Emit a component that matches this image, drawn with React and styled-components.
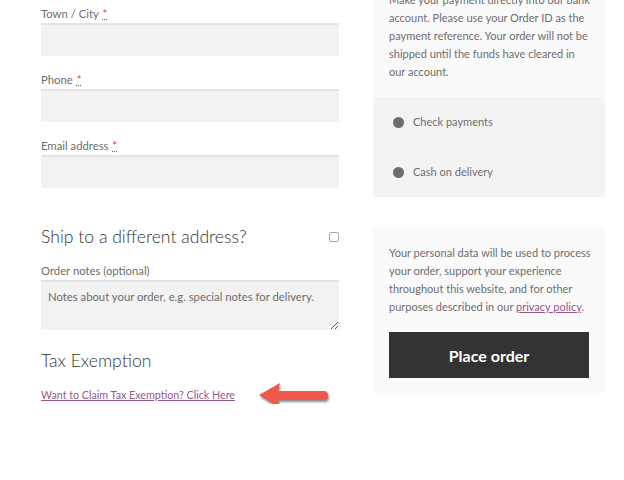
import React from "react";
import styled, { createGlobalStyle } from "styled-components";

const GlobalStyle = createGlobalStyle`
  html, body {
    margin: 0;
    background: #ffffff;
    overflow: hidden;
  }
  body {
    font-family: "Lato", "Liberation Sans", sans-serif;
    color: #6d6d6d;
    font-size: 11.3px;
  }
`;

const Page = styled.div`
  display: grid;
  grid-template-columns: 298px 232px;
  column-gap: 34px;
  padding-left: 41px;
  align-items: start;
`;

const Billing = styled.div`
  display: flex;
  flex-direction: column;
  padding-top: 5px;
`;

const Field = styled.div`
  display: flex;
  flex-direction: column;
  margin-bottom: ${(p) => p.$gap ?? 15}px;
`;

const Label = styled.label`
  line-height: 18px;
  color: #6d6d6d;
`;

const Required = styled.abbr`
  color: #e2401c;
  text-decoration: underline dotted;
  margin-left: 1px;
`;

const TextInput = styled.input`
  height: 33px;
  box-sizing: border-box;
  border: 0;
  background: #f2f2f2;
  box-shadow: inset 0 2px 0 #e4e4e4;
  outline: none;
`;

const NotesArea = styled.textarea`
  height: 50px;
  box-sizing: border-box;
  border: 0;
  background: #f2f2f2;
  box-shadow: inset 0 2px 0 #e4e4e4;
  padding: 8px 7px;
  font-family: inherit;
  font-size: 11.3px;
  line-height: 18px;
  color: #6d6d6d;
  outline: none;
  &::placeholder {
    color: #6d6d6d;
  }
`;

const HeadingRow = styled.div`
  display: flex;
  align-items: center;
  justify-content: space-between;
  margin-top: ${(p) => p.$top}px;
  margin-bottom: ${(p) => p.$bottom}px;
`;

const Heading = styled.h3`
  margin: 0;
  font-size: 17.6px;
  line-height: 24px;
  font-weight: 300;
  color: #333333;
`;

const Check = styled.input.attrs({ type: "checkbox" })`
  appearance: none;
  margin: 0;
  width: 10px;
  height: 10px;
  border: 1px solid #a8a8a8;
  border-radius: 2px;
  background: #fff;
`;

const LinkRow = styled.div`
  display: flex;
  align-items: center;
  height: 18px;
  line-height: 18px;
  font-size: 10.7px;
  white-space: nowrap;
`;

const Link = styled.a`
  color: #96588a;
  text-decoration: underline;
  font-size: inherit;
  cursor: pointer;
`;

// annotation arrow pointing back at the link
const Arrow = styled.svg`
  flex: none;
  margin: -4px 0 -6px 23px;
  filter: drop-shadow(1px 2px 1px rgba(0, 0, 0, 0.45));
`;

const Review = styled.div`
  display: flex;
  flex-direction: column;
  margin-top: -9px;
  font-size: 11px;
`;

const PaymentBox = styled.div`
  background: #fafafa;
  padding: 0 16px 16px;
  line-height: 18px;
  white-space: nowrap;
`;

const Methods = styled.ul`
  list-style: none;
  margin: 0;
  padding: 0;
  background: #f3f3f3;
`;

const Method = styled.li`
  display: flex;
  align-items: center;
  gap: 9px;
  height: 50px;
  padding: 0 20px;
  line-height: 18px;
`;

const Dot = styled.span`
  width: 11px;
  height: 11px;
  border-radius: 50%;
  background: #6d6d6d;
`;

const PrivacyBox = styled.div`
  margin-top: 30px;
  background: #fafafa;
  padding: 17px 16px 15px;
  line-height: 18px;
  white-space: nowrap;
`;

const PlaceOrder = styled.button`
  display: block;
  width: 100%;
  height: 46px;
  margin-top: 16px;
  border: 0;
  background: #333333;
  color: #ffffff;
  font-family: inherit;
  font-size: 16px;
  font-weight: 700;
`;

export default function App() {
  return (
    <>
      <GlobalStyle />
      <Page>
        <Billing>
          <Field>
            <Label>
              Town / City <Required title="required">*</Required>
            </Label>
            <TextInput />
          </Field>
          <Field>
            <Label>
              Phone <Required title="required">*</Required>
            </Label>
            <TextInput />
          </Field>
          <Field $gap={0}>
            <Label>
              Email address <Required title="required">*</Required>
            </Label>
            <TextInput />
          </Field>

          <HeadingRow $top={37} $bottom={13}>
            <Heading>Ship to a different address?</Heading>
            <Check />
          </HeadingRow>
          <Field $gap={0}>
            <Label>Order notes (optional)</Label>
            <NotesArea placeholder="Notes about your order, e.g. special notes for delivery." />
          </Field>

          <HeadingRow $top={19} $bottom={13}>
            <Heading>Tax Exemption</Heading>
          </HeadingRow>
          <LinkRow>
            <Link>Want to Claim Tax Exemption? Click Here</Link>
            <Arrow width="72" height="28" viewBox="0 0 72 28">
              <path
                d="M1 13 L22 1 L20 9 L66 9 Q70 9 70 13.5 Q70 18 66 18 L20 18 L22 26 Z"
                fill="#f0584a"
              />
            </Arrow>
          </LinkRow>
        </Billing>

        <Review>
          <PaymentBox>
            Make your payment directly into our bank
            <br />
            account. Please use your Order ID as the
            <br />
            payment reference. Your order will not be
            <br />
            shipped until the funds have cleared in
            <br />
            our account.
          </PaymentBox>
          <Methods>
            <Method>
              <Dot />
              Check payments
            </Method>
            <Method>
              <Dot />
              Cash on delivery
            </Method>
          </Methods>
          <PrivacyBox>
            Your personal data will be used to process
            <br />
            your order, support your experience
            <br />
            throughout this website, and for other
            <br />
            purposes described in our <Link>privacy policy</Link>.
            <PlaceOrder>Place order</PlaceOrder>
          </PrivacyBox>
        </Review>
      </Page>
    </>
  );
}
